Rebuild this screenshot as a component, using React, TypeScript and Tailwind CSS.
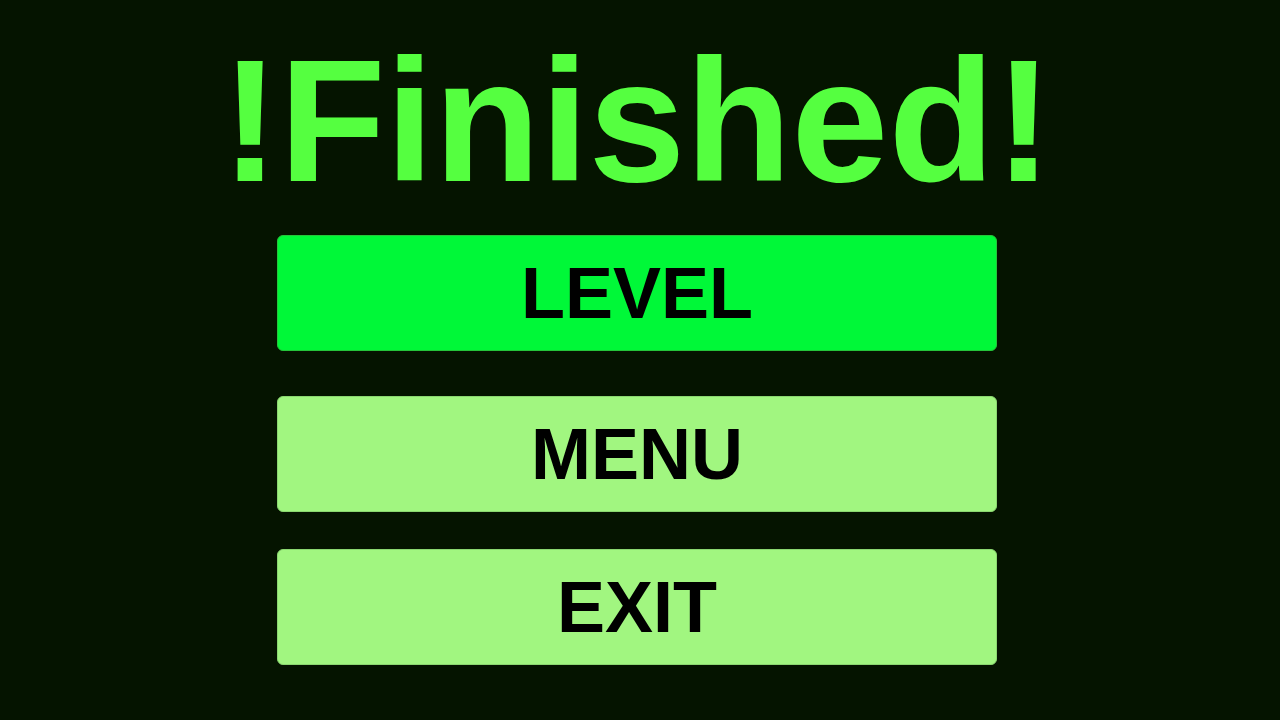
import clsx from 'clsx'

const items = [
  { label: 'LEVEL', active: true },
  { label: 'MENU', active: false },
  { label: 'EXIT', active: false },
]

const App = () => {
  return (
    <main className="flex min-h-screen flex-col items-center bg-[#051400] pt-[61px] pr-[6px] font-['Liberation_Sans',Arial,sans-serif] font-bold">
      <h1 className="text-[174px] leading-[120px] text-[#55ff40]">
        !Finished!
      </h1>

      <nav className="mt-[54px] flex w-full max-w-[720px] flex-col">
        {items.map(({ label, active }) => (
          <button
            key={label}
            type="button"
            className={clsx(
              'h-[116px] rounded-md border text-7xl text-black',
              active
                ? 'mb-[45px] border-[#25c53a] bg-[#00f838]'
                : 'mb-[37px] border-[#8bd770] bg-[#a1f680]'
            )}
          >
            {label}
          </button>
        ))}
      </nav>
    </main>
  )
}

export default App
